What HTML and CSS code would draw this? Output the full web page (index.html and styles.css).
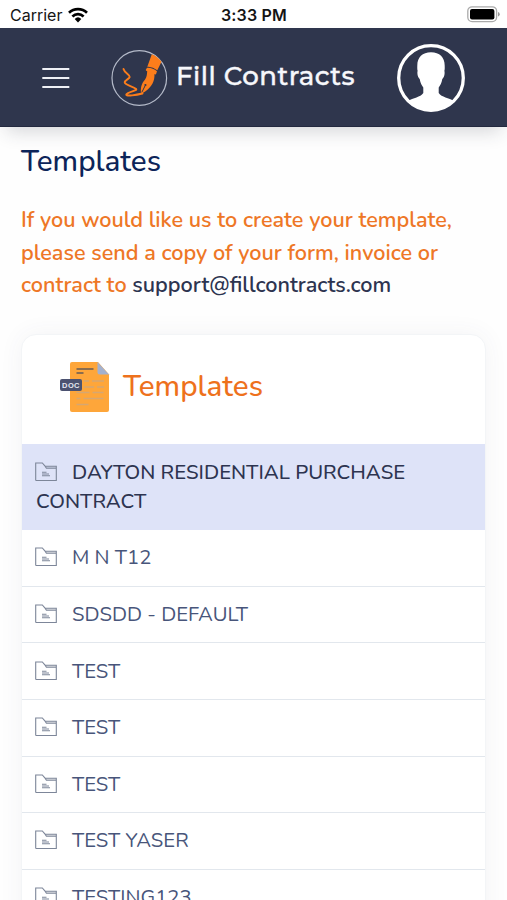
FILE: index.html
```html
<!DOCTYPE html>
<html lang="en">
<head>
<meta charset="utf-8">
<title>Templates - Fill Contracts</title>
<link rel="stylesheet" href="styles.css">
</head>
<body>
<svg class="defs" width="0" height="0" aria-hidden="true">
  <symbol id="folder" viewBox="0 0 22 20">
    <path d="M.7 18.500V1h6.600l2.800 3.200h11.200v14.300H.7M10.100 4.200l1.300 2h9.900" fill="none" stroke="currentColor" stroke-width="1.100"/>
    <path d="M11 5.200h10" stroke="currentColor" stroke-width="1" opacity=".4"/>
    <path d="M7 10.200h4.500M7 12h7M7 13.700h8" stroke="currentColor" stroke-width="1.100"/>
  </symbol>
</svg>
<div class="status">
  <div class="carrier"><span>Carrier</span>
    <svg width="20" height="16" viewBox="0 0 20 16"><g fill="none" stroke="#000" stroke-width="2.700"><path d="M1 5.700a13 13 0 0 1 18 0"/><path d="M4.400 9.400a8.200 8.200 0 0 1 11.200 0"/></g><path d="M6.700 11.900a4.800 4.800 0 0 1 6.600 0L10 15.400z"/></svg>
  </div>
  <span class="time">3:33 PM</span>
  <svg class="battery" width="34" height="17" viewBox="0 0 34 17"><rect x=".8" y=".8" width="28.800" height="14.800" rx="4.300" fill="#fff" stroke="#aaa" stroke-width="1.300"/><rect x="3" y="3" width="24.400" height="10.400" rx="2"/><path d="M31 6q1.700.5 1.700 2.200T31 10.400z" fill="#999"/></svg>
</div>
<header class="bar">
  <svg class="menu" width="28" height="22" viewBox="0 0 28 22"><path d="M.3 2h27M.3 11h27M.3 20h27" stroke="#eef0f5" stroke-width="2"/></svg>
  <svg class="logo" width="58" height="58" viewBox="0 0 58 58">
    <circle cx="29.300" cy="29" r="27.300" fill="none" stroke="#b4bac9" stroke-width="1.200"/>
    <path d="M41.800 5.300Q47.500 7.500 51.500 12.800L47.300 21.300Q42.500 17.300 37.300 17.800Z" fill="#fc7d1b"/>
    <path d="M37 18.800q5.500-.4 10 3.500l-1 3q-.8.300-1.500-.2c.2 7.400-2.600 12.900-9.300 17.400l-3.200 2.100-1-.5c-.5-5 .3-9.400 3.900-13.400 1.900-2.500 2.100-5.300 2.300-8.400q-1.200-.3-1.500-1.200z" fill="#fc7d1b"/>
    <path d="M31.700 43.500l3.300-6.500" stroke="#2f364d" stroke-width="1"/><circle cx="35.400" cy="36" r="1.100" fill="#2f364d"/>
    <path d="M13.500 20C14.500 24 20 25.500 19.700 28c-.5 2.400-5.500 3.200-5 5.600.6 2.400 8.500 3.800 11.500 6.400 1.400 1.700-8.400 2.800-9.900 5.500-.6 2.300 10.700.3 16.200-1" fill="none" stroke="#fc7d1b" stroke-width="1.900" stroke-linecap="round" stroke-linejoin="round"/>
  </svg>
  <span class="brand">Fill Contracts</span>
  <svg class="avatar" width="68" height="68" viewBox="0 0 68 68"><circle cx="34" cy="34" r="32.300" fill="none" stroke="#fff" stroke-width="3.300"/><path d="M34 8.200c8.600 0 13.700 5.100 13.700 13.300 0 2 .2 3.500-.3 5.200.8 4.500-.7 6.800-2.100 8.400-.7 4-2 6.600-3.600 8.300v5.500c3 4.500 9.900 4.500 15.700 8.300A33 33 0 0 1 10.600 57.200c5.800-3.800 12.700-3.800 15.700-8.300v-5.500c-1.600-1.700-2.900-4.300-3.600-8.300-1.400-1.600-2.900-3.900-2.100-8.400-.5-1.700-.3-3.200-.3-5.200C20.300 13.300 25.400 8.200 34 8.200z" fill="#fff"/></svg>
</header>
<main class="page">
  <h1 class="title">Templates</h1>
  <p class="intro">If you would like us to create your template,<br>please send a copy of your form, invoice or<br>contract to <a class="mail">support@fillcontracts.com</a></p>
  <section class="card">
    <div class="card-head">
      <svg width="50" height="52" viewBox="0 0 50 52">
        <path d="M12 1h26l11 12.500v35.500a2 2 0 0 1-2 2H12a2 2 0 0 1-2-2V3a2 2 0 0 1 2-2z" fill="#fea63a"/>
        <path d="M37.500 1 49 13.500h-9.500a2 2 0 0 1-2-2z" fill="#a3b1cf"/>
        <path d="M16.500 8h17M16.500 12h7" stroke="#655b55" stroke-width="1.700"/>
        <path d="M24 20h5m3 0h12M24 26h10m3 0h7M16.500 31.500h13m3 0h11M16.500 37.500h4m3 0h20M16.500 43.500h12" stroke="#d6a772" stroke-width="1.500"/>
        <rect x="0" y="18" width="22" height="12" rx="2" fill="#4b5270"/>
        <text class="doc" x="11" y="26.600" text-anchor="middle">DOC</text>
      </svg>
      <h2 class="card-title">Templates</h2>
    </div>
    <ul class="list">
      <li class="row active"><svg class="ic"><use href="#folder"/></svg><span>DAYTON RESIDENTIAL PURCHASE<br>CONTRACT</span></li>
      <li class="row"><svg class="ic"><use href="#folder"/></svg><span>M N T12</span></li>
      <li class="row"><svg class="ic"><use href="#folder"/></svg><span>SDSDD - DEFAULT</span></li>
      <li class="row"><svg class="ic"><use href="#folder"/></svg><span>TEST</span></li>
      <li class="row"><svg class="ic"><use href="#folder"/></svg><span>TEST</span></li>
      <li class="row"><svg class="ic"><use href="#folder"/></svg><span>TEST</span></li>
      <li class="row"><svg class="ic"><use href="#folder"/></svg><span>TEST YASER</span></li>
      <li class="row"><svg class="ic"><use href="#folder"/></svg><span>TESTING123</span></li>
    </ul>
  </section>
</main>
</body>
</html>
```
FILE: styles.css
```css
* { box-sizing: border-box; }
html, body { height: 900px; overflow: hidden; }
body { margin: 0; background: #fefefe; font-family: Nunito, Lato, sans-serif; display: flex; flex-direction: column; }
h1, h2, p, ul { margin: 0; padding: 0; font-weight: 500; }
svg { display: block; flex: none; }
.defs { position: absolute; }
.status { height: 28px; flex: none; display: grid; grid-template-columns: 1fr auto 1fr; align-items: center; padding: 1px 6px 0 10px; background: #fff; color: #151515; font: 400 16px/20px Inter, sans-serif; }
.carrier { display: flex; align-items: center; gap: 6px; }
.time { font-weight: 600; letter-spacing: .2px; margin-left: -3px; }
.battery { justify-self: end; }
.bar { height: 99px; flex: none; display: flex; align-items: center; padding: 1px 0 0 42px; background: #2f364d; border-bottom: 1px solid #23293f; box-shadow: 0 10px 18px -6px rgba(40, 45, 60, .2); }
.logo { margin-left: 40px; }
.brand { margin: -3px 0 0 8px; width: 181px; white-space: nowrap; color: #f6f7fb; font: 500 26px/32px Montserrat, Lato, sans-serif; letter-spacing: .5px; -webkit-text-stroke: .4px #f6f7fb; }
.avatar { margin-left: 40px; }
.page { padding: 16px 21px 0 21px; }
.title { color: #0c2459; font-size: 29.700px; line-height: 37px; }
.intro { margin-top: 24.300px; color: #ee7726; font-size: 21.600px; line-height: 32.400px; white-space: nowrap; font-weight: 570; }
.mail { color: #2d3450; }
.card { margin-top: 32.500px; height: 620px; background: #fff; border: 1px solid #f3f5f7; border-radius: 15px; box-shadow: 0 0 24px rgba(60, 75, 100, .06); }
.card-head { height: 109px; display: flex; align-items: center; padding: 0 0 5px 38px; gap: 13px; }
.card-title { margin-top: -2px; color: #ee711c; font-size: 29.700px; line-height: 36px; }
.doc { font: 700 7.500px "Liberation Sans", sans-serif; fill: #e5e8f2; letter-spacing: .4px; }
.list { list-style: none; }
.row { padding: 13.200px 14px 14px; border-bottom: 1px solid #e2e7ed; color: #48557a; font-size: 20.300px; font-weight: 380; line-height: 28.400px; white-space: nowrap; }
.active { padding: 14.200px 14px; background: #dee3f8; color: #2d3450; font-size: 20.350px; font-weight: 500; border-color: #dee3f8; }
.ic { display: inline-block; width: 22px; height: 20px; margin: 0 15px 0 -1px; vertical-align: -3px; color: #7d8699; }
```
